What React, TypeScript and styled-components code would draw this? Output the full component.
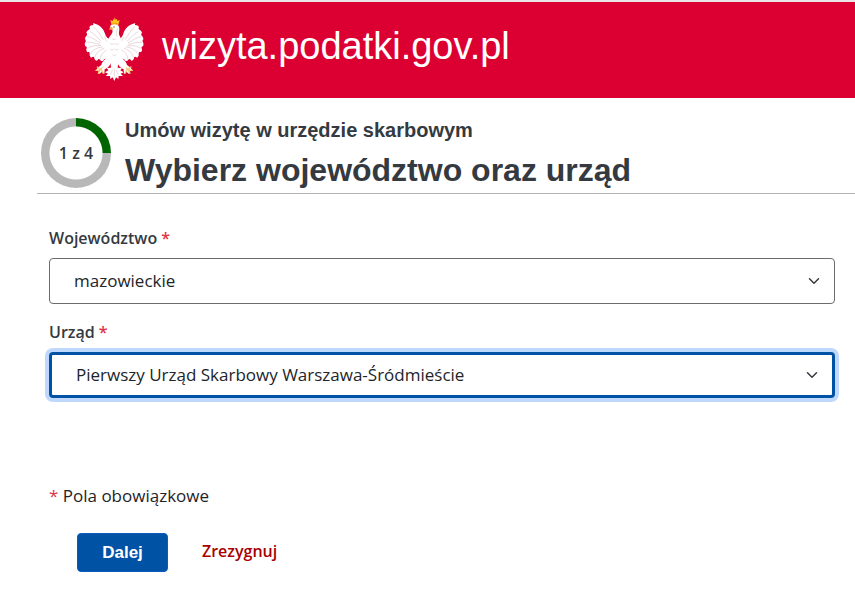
import React from "react";
import styled, { createGlobalStyle } from "styled-components";

const ink = "#343a40";
const blue = "#0052a5";
const arial = `"Liberation Sans", Arial, sans-serif`;

const GlobalStyle = createGlobalStyle`
  * { box-sizing: border-box; }
  body {
    margin: 0;
    background: #fff;
    color: #1f2328;
    font-family: "Open Sans", sans-serif;
    font-size: 16px;
    line-height: 24px;
  }
`;

const Header = styled.header`
  display: flex;
  align-items: flex-start;
  gap: 18px;
  padding: 15px 84px 16px;
  border-top: 2px solid #e9e4e5;
  background: #dc0032;
`;

const EagleIcon = styled.svg`
  display: block;
  flex: none;
  width: 60px;
  height: 65px;
`;

const SiteName = styled.a`
  padding-top: 7px;
  color: #fff;
  font-family: ${arial};
  font-size: 38px;
  line-height: 44px;
  text-decoration: none;
`;

const StepHeader = styled.section`
  display: flex;
  gap: 14px;
  margin-left: 37px;
  padding: 20px 4px 3px;
  border-bottom: 1px solid #b3b3b3;
`;

const Progress = styled.div`
  display: grid;
  flex: none;
  place-items: center;
  width: 70px;
  height: 70px;
  border-radius: 50%;
  background:
    radial-gradient(circle closest-side, #fff 26px, transparent 27px),
    conic-gradient(#006400 25%, #b8b8b8 0);
  color: ${ink};
  font-weight: 600;
`;

const Headings = styled.div`
  font-family: ${arial};
  color: ${ink};
`;

const Kicker = styled.p`
  margin: 0;
  font-size: 20px;
  font-weight: 700;
  line-height: 24px;
`;

const Title = styled.h1`
  margin: 8px 0 0;
  font-size: 32px;
  line-height: 40px;
`;

const Form = styled.form`
  padding: 32px 20px 20px 49px;
`;

const Field = styled.div`
  margin-bottom: 16px;
`;

const Label = styled.label`
  display: block;
  margin-bottom: 8px;
  color: ${ink};
  font-weight: 600;
`;

const Star = styled.span`
  color: #dc3545;
`;

const SelectBox = styled.div<{ $active?: boolean }>`
  display: grid;
  align-items: center;
  height: 46px;
  border: ${(p) => (p.$active ? `3px solid ${blue}` : "1px solid #6c6c6c")};
  border-radius: 4px;
  box-shadow: ${(p) => (p.$active ? "0 0 0 4px #bfd8fd" : "none")};
`;

const Select = styled.select`
  grid-area: 1 / 1;
  width: 100%;
  height: 100%;
  padding: 0 48px 0 24px;
  border: 0;
  outline: 0;
  appearance: none;
  background: transparent;
  color: #212529;
  font: 17px/24px "Open Sans", sans-serif;
`;

const Chevron = styled.svg`
  grid-area: 1 / 1;
  justify-self: end;
  width: 12px;
  height: 12px;
  margin-right: 14px;
  pointer-events: none;
`;

const Note = styled.p`
  margin: 86px 0 25px;
  font-size: 17px;
`;

const Actions = styled.div`
  display: flex;
  align-items: flex-start;
  gap: 34px;
  padding-left: 28px;
`;

const NextButton = styled.button`
  width: 91px;
  height: 39px;
  border: 1px solid #0b5cc0;
  border-radius: 4px;
  background: ${blue};
  color: #fff;
  font: 700 17px/24px ${arial};
`;

const CancelLink = styled.a`
  padding-top: 6px;
  color: #a80000;
  font-weight: 600;
  text-decoration: none;
`;

function Wing() {
  return (
    <g>
      <path
        fill="#fff"
        d="M101 86 C92 90 84 82 81 71 C76 54 63 44 45 39 C47 43 47 45 43 46 C39 46 36 48 34 51 C36 54 36 57 33 59 C29 61 26 64 25 68 C28 71 28 75 25 78 C22 81 21 84 21 88 C24 91 24 94 22 97 C20 101 20 105 22 109 C26 109 27 112 26 115 C24 119 25 123 28 127 C33 125 35 127 35 131 C34 136 36 140 40 143 C44 139 48 139 49 143 C49 148 52 151 57 152 C60 147 64 145 66 149 C68 153 72 154 76 152 C78 147 81 145 86 147 L101 132 Z"
      />
      <path
        fill="none"
        stroke="#dfc3c8"
        strokeWidth="2"
        strokeLinecap="round"
        d="M48 52 C60 61 66 74 75 88 M37 65 C51 72 57 83 69 93 M29 80 C45 83 53 92 66 98 M27 97 C43 95 52 101 65 103 M30 114 C43 106 52 107 68 107 M38 130 C47 117 57 113 73 111 M51 141 C55 127 64 120 78 115 M67 147 C68 134 76 125 87 119 M80 81 C85 95 91 98 98 101"
      />
    </g>
  );
}

function Talon() {
  return (
    <g>
      <path
        fill="#fff"
        d="M90 138 C83 148 73 153 70 165 L59 173 L53 182 L62 184 L64 192 L72 185 L79 192 L80 178 C94 171 99 162 102 149 Z"
      />
      <path
        fill="none"
        stroke="#f1c976"
        strokeWidth="4"
        strokeLinecap="round"
        strokeLinejoin="round"
        d="M72 174 L65 180 L54 181 M66 180 L61 190 M69 178 L76 190 M66 177 L58 171"
      />
    </g>
  );
}

function Eagle() {
  return (
    <EagleIcon viewBox="18 21 180 195" role="img" aria-label="Godło Polski">
      <Wing />
      <g transform="translate(217 0) scale(-1 1)">
        <Wing />
      </g>
      <path
        fill="#fff"
        d="M97 153 L99 173 L86 174 L91 181 L81 187 L90 191 L83 198 L96 198 L97 207 L104 202 L109 213 L114 202 L121 207 L122 198 L135 198 L128 191 L137 187 L127 181 L132 174 L119 173 L121 153 Z"
      />
      <Talon />
      <g transform="translate(217 0) scale(-1 1)">
        <Talon />
      </g>
      <path
        fill="#fff"
        d="M97 48 C100 41 119 39 123 50 C126 60 121 65 124 76 C133 91 134 117 128 138 C124 151 119 163 109 170 C98 163 92 151 88 138 C83 117 85 91 96 79 C102 71 105 66 103 59 L96 57 Z"
      />
      <path
        fill="none"
        stroke="#dcc6ca"
        strokeWidth="2"
        strokeLinecap="round"
        d="M119 56 C114 66 116 72 117 79 M103 87 Q108 93 113 87 M97 101 Q102 107 107 101 M111 101 Q116 107 121 101 M97 118 Q102 124 107 118 M111 118 Q116 124 121 118 M104 135 Q109 141 114 135 M109 177 L109 198 M103 181 L98 193 M115 181 L120 193"
      />
      <path fill="#e5ac3b" d="M102 50 L95 53 L94 61 L99 58 L106 59 Z" />
      <circle cx="108" cy="51" r="2" fill="#69454b" />
      <path
        fill="#ffc51b"
        d="M101 44 L97 30 L104 33 L106 27 L109 29 L110 21 L113 29 L117 27 L118 33 L125 30 L121 45 Q111 41 101 44 Z"
      />
      <path fill="none" stroke="#d78a09" strokeWidth="2" d="M103 41 Q111 38 119 41" />
    </EagleIcon>
  );
}

function Arrow() {
  return (
    <Chevron viewBox="0 0 16 16" aria-hidden="true">
      <path
        d="M2 5l6 6 6-6"
        fill="none"
        stroke={ink}
        strokeWidth="2"
        strokeLinecap="round"
        strokeLinejoin="round"
      />
    </Chevron>
  );
}

type SelectFieldProps = { id: string; label: string; value: string; active?: boolean };

function SelectField({ id, label, value, active }: SelectFieldProps) {
  return (
    <Field>
      <Label htmlFor={id}>
        {label} <Star>*</Star>
      </Label>
      <SelectBox $active={active}>
        <Select id={id} defaultValue={value} required>
          <option value={value}>{value}</option>
        </Select>
        <Arrow />
      </SelectBox>
    </Field>
  );
}

export default function App() {
  return (
    <>
      <GlobalStyle />
      <Header>
        <Eagle />
        <SiteName href="#">wizyta.podatki.gov.pl</SiteName>
      </Header>
      <main>
        <StepHeader>
          <Progress>1 z 4</Progress>
          <Headings>
            <Kicker>Umów wizytę w urzędzie skarbowym</Kicker>
            <Title>Wybierz województwo oraz urząd</Title>
          </Headings>
        </StepHeader>
        <Form>
          <SelectField id="wojewodztwo" label="Województwo" value="mazowieckie" />
          <SelectField
            id="urzad"
            label="Urząd"
            value="Pierwszy Urząd Skarbowy Warszawa-Śródmieście"
            active
          />
          <Note>
            <Star>*</Star> Pola obowiązkowe
          </Note>
          <Actions>
            <NextButton type="button">Dalej</NextButton>
            <CancelLink href="#">Zrezygnuj</CancelLink>
          </Actions>
        </Form>
      </main>
    </>
  );
}
